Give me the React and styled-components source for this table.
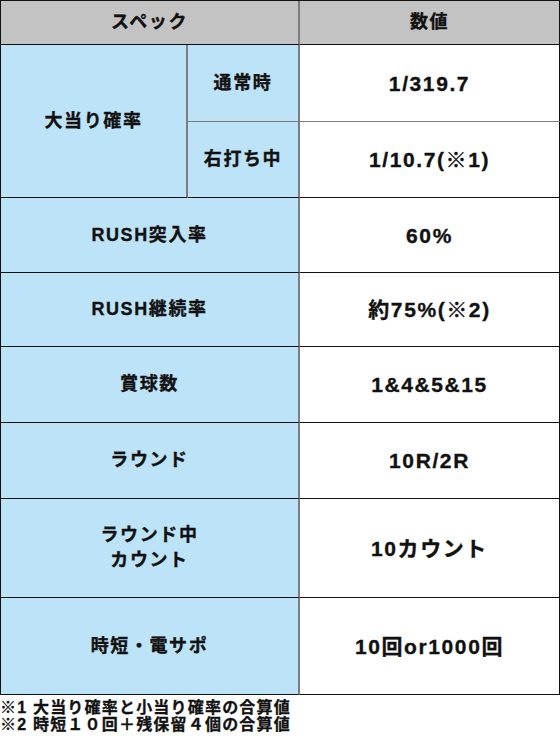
import React from "react";
import styled, { createGlobalStyle } from "styled-components";

const Global = createGlobalStyle`
  html, body { margin: 0; padding: 0; background: #fff; }
  body { font-family: "Liberation Sans", "Noto Sans CJK JP", sans-serif; }
`;

const Page = styled.div`
  width: 560px;
`;

const Grid = styled.div`
  display: grid;
  grid-template-columns: 187px 112px 261px;
  grid-template-rows: 44px 77px 76px 75px 74px 76px 76px 99px 97px;
  box-sizing: border-box;
  width: 560px;
  border-top: 1px solid #111;
  border-left: 1px solid #111;
`;

const Cell = styled.div`
  box-sizing: border-box;
  display: flex;
  align-items: center;
  justify-content: center;
  text-align: center;
  font-weight: 700;
  color: #111;
  -webkit-text-stroke: 0.35px #111;
  border-right: 2px solid ${(p) => (p.$last ? "#111" : "#7d7d7d")};
  border-bottom: 1px solid ${(p) => (p.$subline ? "#7d7d7d" : "#111")};
  background: ${(p) =>
    p.$kind === "head" ? "#c3c3c3" : p.$kind === "label" ? "#bde3f8" : "#ffffff"};
  grid-column: ${(p) => p.$col || "auto"};
  grid-row: ${(p) => p.$row || "auto"};
  font-size: ${(p) => (p.$kind === "value" ? "21px" : "18px")};
  letter-spacing: ${(p) => (p.$kind === "value" ? "1.6px" : "1.6px")};
  line-height: 25px;
`;

const Notes = styled.div`
  padding-top: 4px;
  font-size: 16px;
  font-weight: 700;
  line-height: 17px;
  letter-spacing: 1.2px;
  color: #111;
  -webkit-text-stroke: 0.3px #111;
`;

const rows = [
  { label: "RUSH突入率", value: "60%" },
  { label: "RUSH継続率", value: "約75%(※2)" },
  { label: "賞球数", value: "1&4&5&15" },
  { label: "ラウンド", value: "10R/2R" },
  { label: <>ラウンド中<br />カウント</>, value: "10カウント" },
  { label: "時短・電サポ", value: "10回or1000回" },
];

export default function App() {
  return (
    <Page>
      <Global />
      <Grid>
        <Cell $kind="head" $col="1 / 3">スペック</Cell>
        <Cell $kind="head" $last>数値</Cell>

        <Cell $kind="label" $col="1" $row="2 / 4">大当り確率</Cell>
        <Cell $kind="label" $col="2" $row="2" $subline>通常時</Cell>
        <Cell $kind="value" $col="3" $row="2" $last $subline>1/319.7</Cell>
        <Cell $kind="label" $col="2" $row="3">右打ち中</Cell>
        <Cell $kind="value" $col="3" $row="3" $last>1/10.7(※1)</Cell>

        {rows.map((r, i) => (
          <React.Fragment key={i}>
            <Cell $kind="label" $col="1 / 3" $row={String(i + 4)}>{r.label}</Cell>
            <Cell $kind="value" $col="3" $row={String(i + 4)} $last>{r.value}</Cell>
          </React.Fragment>
        ))}
      </Grid>
      <Notes>
        ※1 大当り確率と小当り確率の合算値<br />
        ※2 時短１０回＋残保留４個の合算値
      </Notes>
    </Page>
  );
}
